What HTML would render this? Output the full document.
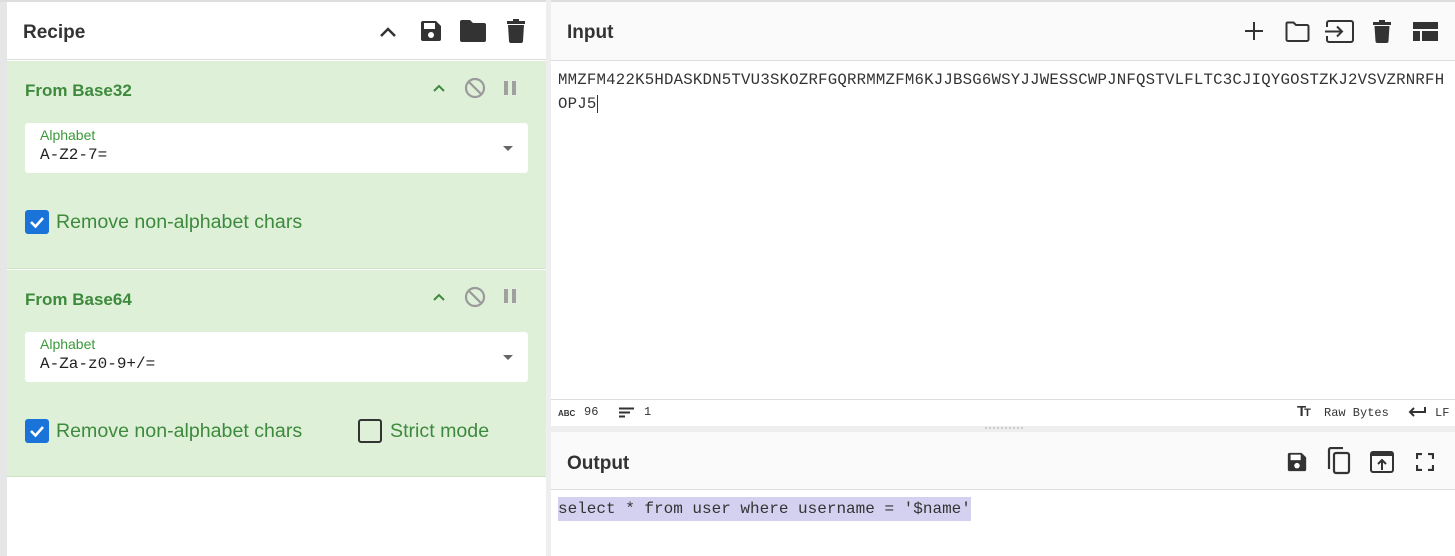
<!DOCTYPE html>
<html><head><meta charset="utf-8"><style>
*{margin:0;padding:0;box-sizing:border-box}
body{width:1455px;height:556px;overflow:hidden;background:#fff;font-family:"Liberation Sans",sans-serif;position:relative}
.a{position:absolute}
.mono{font-family:"Liberation Mono",monospace}
.h{font-weight:bold;font-size:19px;color:#333}
.g{color:#3a8a3a}
.gt{font-weight:bold;font-size:17px;color:#3d8a3d}
.lbl{font-size:14px;color:#3a9a3a}
.cb{width:24px;height:24px;border-radius:3px;background:#1a73d8}
.cbt{font-size:19.6px;color:#3d8a3d}
</style></head><body>
<div class="a" style="left:0;top:0;width:7px;height:556px;background:#e6e6e6"></div>
<div class="a" style="left:0;top:0;width:1455px;height:2px;background:#ddd"></div>
<div class="a" style="left:546px;top:0;width:5px;height:556px;background:#eee"></div>
<div class="a" style="left:7px;top:2px;width:539px;height:58px;background:#fff;border-bottom:1px solid #ddd"></div>
<div class="a h" style="left:23px;top:22px">Recipe</div>
<svg class="a" style="left:378px;top:22px" width="20" height="20" viewBox="0 0 20 20"><path d="M3 14 L10 7 L17 14" stroke="#333" stroke-width="2.5" fill="none"/></svg>
<svg class="a" style="left:419px;top:19px" width="24" height="24" viewBox="0 0 24 24"><path d="M2 4a2 2 0 0 1 2-2h13l5 5v13a2 2 0 0 1-2 2H4a2 2 0 0 1-2-2z" fill="#333"/><rect x="5" y="4" width="11" height="6" fill="#fff"/><circle cx="12" cy="16" r="3" fill="#fff"/></svg>
<svg class="a" style="left:460px;top:20px" width="26" height="22" viewBox="0 0 26 22"><path d="M0 2a2 2 0 0 1 2-2h8l3 3h11a2 2 0 0 1 2 2v15a2 2 0 0 1-2 2H2a2 2 0 0 1-2-2z" fill="#333"/></svg>
<svg class="a" style="left:506px;top:19px" width="20" height="24" viewBox="0 0 20 24"><rect x="1" y="2" width="18" height="3" fill="#333"/><rect x="7" y="0" width="6" height="3" fill="#333"/><path d="M2 6h16l-1 16a2 2 0 0 1-2 2H5a2 2 0 0 1-2-2z" fill="#333"/></svg>
<div class="a" style="left:7px;top:61px;width:539px;height:208px;background:#dff0d8;border-bottom:1px solid #cfe3c5"></div>
<div class="a gt" style="left:25px;top:81px">From Base32</div>
<svg class="a" style="left:432px;top:82px" width="14" height="12" viewBox="0 0 14 12"><path d="M2 9 L7 4 L12 9" stroke="#3d8a3d" stroke-width="2" fill="none"/></svg>
<svg class="a" style="left:464px;top:77px" width="22" height="22" viewBox="0 0 22 22"><circle cx="11" cy="11" r="9" stroke="#9a9a9a" stroke-width="2.2" fill="none"/><path d="M4.5 4.5 L17.5 17.5" stroke="#9a9a9a" stroke-width="2.2"/></svg>
<div class="a" style="left:504px;top:81px;width:4px;height:14px;background:#a0a0a0"></div>
<div class="a" style="left:512px;top:81px;width:4px;height:14px;background:#a0a0a0"></div>
<div class="a" style="left:25px;top:123px;width:503px;height:50px;background:#fff;border-radius:3px"></div>
<div class="a lbl" style="left:40px;top:127px">Alphabet</div>
<div class="a mono" style="left:40px;top:146px;font-size:16px;color:#222">A-Z2-7=</div>
<div class="a" style="left:503px;top:146px;width:0;height:0;border-left:5px solid transparent;border-right:5px solid transparent;border-top:5px solid #666"></div>
<div class="a cb" style="left:25px;top:210px"><svg width="24" height="24"><path d="M6 12 L10.5 16.5 L18 8" stroke="#fff" stroke-width="2.6" fill="none"/></svg></div>
<div class="a cbt" style="left:56px;top:211px">Remove non-alphabet chars</div>
<div class="a" style="left:7px;top:270px;width:539px;height:207px;background:#dff0d8;border-bottom:1px solid #cfe3c5"></div>
<div class="a gt" style="left:25px;top:290px">From Base64</div>
<svg class="a" style="left:432px;top:291px" width="14" height="12" viewBox="0 0 14 12"><path d="M2 9 L7 4 L12 9" stroke="#3d8a3d" stroke-width="2" fill="none"/></svg>
<svg class="a" style="left:464px;top:286px" width="22" height="22" viewBox="0 0 22 22"><circle cx="11" cy="11" r="9" stroke="#9a9a9a" stroke-width="2.2" fill="none"/><path d="M4.5 4.5 L17.5 17.5" stroke="#9a9a9a" stroke-width="2.2"/></svg>
<div class="a" style="left:504px;top:289px;width:4px;height:14px;background:#a0a0a0"></div>
<div class="a" style="left:512px;top:289px;width:4px;height:14px;background:#a0a0a0"></div>
<div class="a" style="left:25px;top:332px;width:503px;height:50px;background:#fff;border-radius:3px"></div>
<div class="a lbl" style="left:40px;top:336px">Alphabet</div>
<div class="a mono" style="left:40px;top:355px;font-size:16px;color:#222">A-Za-z0-9+/=</div>
<div class="a" style="left:503px;top:355px;width:0;height:0;border-left:5px solid transparent;border-right:5px solid transparent;border-top:5px solid #666"></div>
<div class="a cb" style="left:25px;top:419px"><svg width="24" height="24"><path d="M6 12 L10.5 16.5 L18 8" stroke="#fff" stroke-width="2.6" fill="none"/></svg></div>
<div class="a cbt" style="left:56px;top:420px">Remove non-alphabet chars</div>
<div class="a" style="left:358px;top:419px;width:24px;height:24px;border:2px solid #333;border-radius:3px"></div>
<div class="a cbt" style="left:390px;top:420px">Strict mode</div>
<div class="a" style="left:551px;top:2px;width:904px;height:59px;background:#fafafa;border-bottom:1px solid #ddd"></div>
<div class="a h" style="left:567px;top:22px">Input</div>
<svg class="a" style="left:1244px;top:21px" width="20" height="20"><path d="M10 1v18M1 10h18" stroke="#333" stroke-width="2"/></svg>
<svg class="a" style="left:1285px;top:21px" width="25" height="21" viewBox="0 0 25 21"><path d="M1.5 2.5a1 1 0 0 1 1-1h6l2.5 2.5h11a1.5 1.5 0 0 1 1.5 1.5v13a1.5 1.5 0 0 1-1.5 1.5h-19a1.5 1.5 0 0 1-1.5-1.5z" stroke="#333" stroke-width="2" fill="none"/></svg>
<svg class="a" style="left:1325px;top:20px" width="30" height="23" viewBox="0 0 30 23"><path d="M2 7V3a2 2 0 0 1 2-2h22a2 2 0 0 1 2 2v17a2 2 0 0 1-2 2H4a2 2 0 0 1-2-2v-4" stroke="#333" stroke-width="2" fill="none"/><path d="M0 11.5h17M12 6.5l5 5-5 5" stroke="#333" stroke-width="2" fill="none"/></svg>
<svg class="a" style="left:1373px;top:20px" width="18" height="23" viewBox="0 0 18 23"><rect x="0" y="2" width="18" height="3" fill="#333"/><rect x="6" y="0" width="6" height="3" fill="#333"/><path d="M1.5 6h15l-1 15a2 2 0 0 1-2 2h-9a2 2 0 0 1-2-2z" fill="#333"/></svg>
<svg class="a" style="left:1413px;top:22px" width="25" height="19" viewBox="0 0 25 19"><rect x="0" y="0" width="25" height="7" fill="#333"/><rect x="0" y="9" width="7" height="10" fill="#333"/><rect x="9" y="9" width="16" height="10" fill="#333"/></svg>
<div class="a mono" style="left:558px;top:68px;font-size:15.7px;line-height:24px;letter-spacing:0.22px;color:#333">MMZFM422K5HDASKDN5TVU3SKOZRFGQRRMMZFM6KJJBSG6WSYJJWESSCWPJNFQSTVLFLTC3CJIQYGOSTZKJ2VSVZRNRFH<br>OPJ5<span style="border-left:1px solid #333"></span></div>
<div class="a" style="left:551px;top:399px;width:904px;height:27px;background:#fff;border-top:1px solid #ddd"></div>
<div class="a" style="left:558px;top:409px;font-size:8px;font-weight:bold;color:#333">ABC</div>
<div class="a mono" style="left:584px;top:405px;font-size:12px;color:#333">96</div>
<svg class="a" style="left:619px;top:407px" width="16" height="12"><path d="M0 1.5h15M0 5.5h11M0 9.5h6" stroke="#333" stroke-width="2"/></svg>
<div class="a mono" style="left:644px;top:405px;font-size:12px;color:#333">1</div>
<div class="a" style="left:1297px;top:403px;font-size:15px;font-weight:bold;color:#333;letter-spacing:-2px">T<span style="font-size:11px">T</span></div>
<div class="a mono" style="left:1324px;top:406px;font-size:12px;color:#333">Raw Bytes</div>
<svg class="a" style="left:1408px;top:406px" width="18" height="12"><path d="M17 1v5H2M6 2L2 6l4 4" stroke="#333" stroke-width="2" fill="none"/></svg>
<div class="a mono" style="left:1435px;top:406px;font-size:12px;color:#333">LF</div>
<div class="a" style="left:551px;top:426px;width:904px;height:6px;background:#eee"></div>
<div class="a" style="left:985px;top:427px;width:38px;height:2px;border-top:2px dotted #ccc"></div>
<div class="a" style="left:551px;top:432px;width:904px;height:58px;background:#fafafa;border-bottom:1px solid #ddd"></div>
<div class="a h" style="left:567px;top:453px">Output</div>
<svg class="a" style="left:1286px;top:451px" width="22" height="22" viewBox="0 0 24 24"><path d="M2 4a2 2 0 0 1 2-2h13l5 5v13a2 2 0 0 1-2 2H4a2 2 0 0 1-2-2z" fill="#333"/><rect x="5" y="4" width="11" height="6" fill="#fff"/><circle cx="12" cy="16" r="3" fill="#fff"/></svg>
<svg class="a" style="left:1327px;top:447px" width="27" height="28" viewBox="0 0 27 28"><path d="M2 22V3a2 2 0 0 1 2-2h12" stroke="#333" stroke-width="2.2" fill="none"/><rect x="7" y="6" width="15" height="20" rx="2" stroke="#333" stroke-width="2.2" fill="none"/></svg>
<svg class="a" style="left:1370px;top:451px" width="24" height="22" viewBox="0 0 24 22"><rect x="1" y="1" width="22" height="20" rx="2" stroke="#333" stroke-width="2" fill="none"/><rect x="1" y="1" width="22" height="4" fill="#333"/><path d="M12 19V10M8 13l4-4 4 4" stroke="#333" stroke-width="2" fill="none"/></svg>
<svg class="a" style="left:1416px;top:453px" width="18" height="18"><path d="M1 6V1h5M12 1h5v5M17 12v5h-5M6 17H1v-5" stroke="#333" stroke-width="2.2" fill="none"/></svg>
<div class="a mono" style="left:558px;top:497px;font-size:16px;line-height:24px;color:#333;background:#d4d1f0">select * from user where username = '$name'</div>
</body></html>
